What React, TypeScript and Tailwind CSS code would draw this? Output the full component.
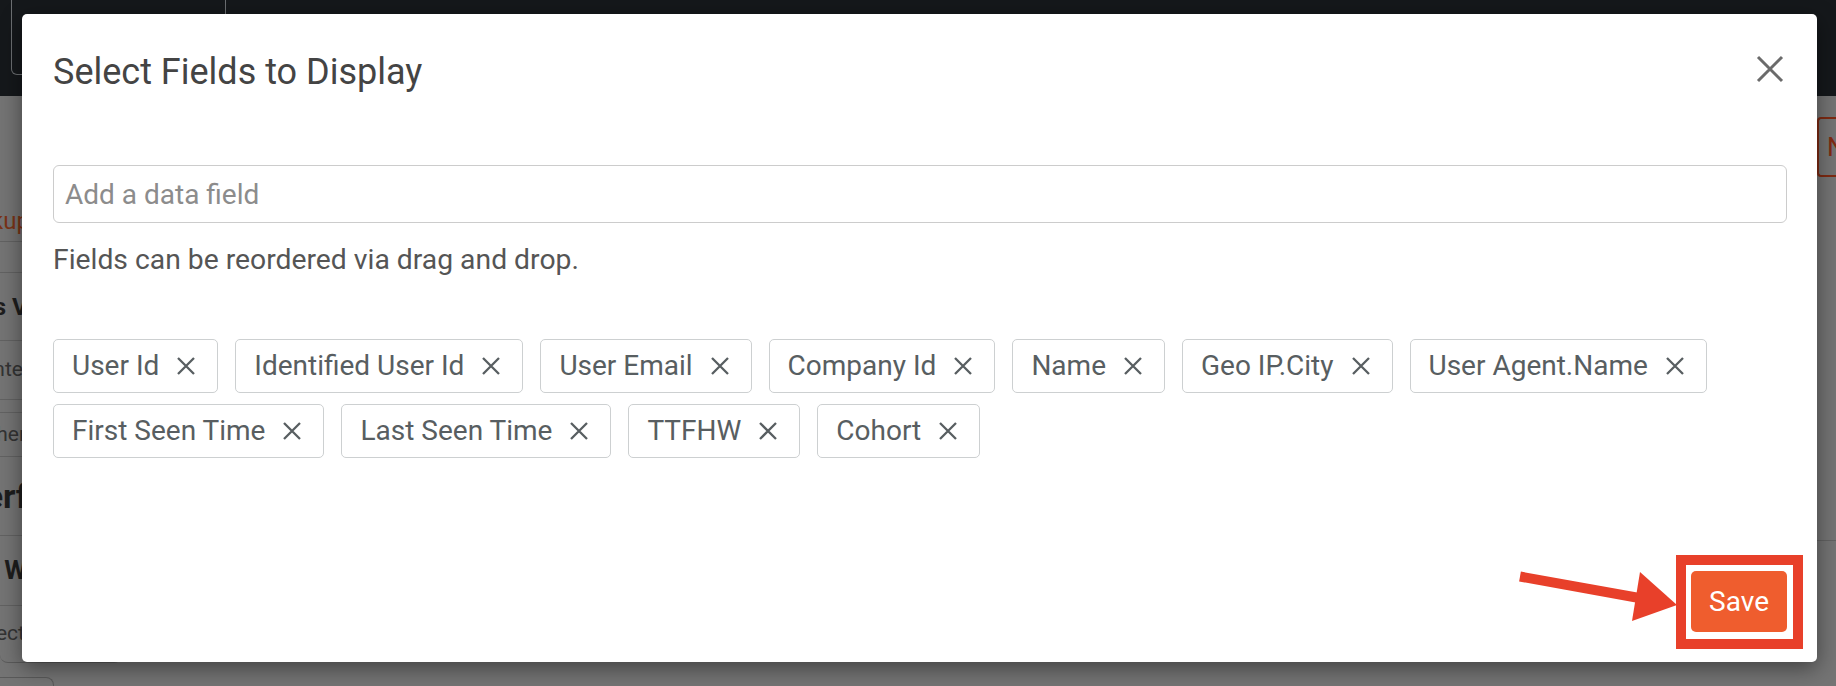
const fields = [
  "User Id",
  "Identified User Id",
  "User Email",
  "Company Id",
  "Name",
  "Geo IP.City",
  "User Agent.Name",
  "First Seen Time",
  "Last Seen Time",
  "TTFHW",
  "Cohort",
];

function CrossIcon({ className }: { className?: string }) {
  return (
    <svg viewBox="0 0 20 20" className={className} fill="none" stroke="currentColor" strokeWidth="2.3">
      <path d="M2 2 L18 18 M18 2 L2 18" />
    </svg>
  );
}

function FieldTag({ label }: { label: string }) {
  return (
    <div className="flex h-[54px] items-center rounded-[5px] border border-[#cdd0d1] pl-[18px] pr-[21px] text-[28px] text-[#585e61]">
      <span className="whitespace-nowrap">{label}</span>
      <CrossIcon className="ml-[17px] h-[20px] w-[20px] shrink-0" />
    </div>
  );
}

// the dimmed page behind the dialog, only a sliver of it shows
function BackdropPage() {
  return (
    <div className="flex h-full flex-col">
      <header className="h-[96px] shrink-0 bg-[#15181b] pl-[11px]">
        <div className="h-[75px] w-[215px] rounded-b-[6px] border border-t-0 border-[#6c6f72]" />
      </header>
      <div className="flex flex-1 justify-between">
        <div className="flex w-[140px] flex-col text-[21px]">
          <div className="h-[104px]" />
          <div className="flex h-[42px] w-[30px] items-center justify-end overflow-hidden whitespace-nowrap border-b border-[#626262] text-[24px] text-[#7a3316]">
            Backup
          </div>
          <div className="h-[31px] w-[22px] border-b border-[#626262]" />
          <div className="flex h-[68px] w-[34px] items-center justify-end overflow-hidden whitespace-nowrap border-b border-[#626262] text-[24px] font-bold text-[#1d1d1d]">
            Fields Vi
          </div>
          <div className="flex h-[59px] w-[30px] items-center justify-end overflow-hidden whitespace-nowrap border-b border-[#626262] text-[#333]">
            Enter
          </div>
          <div className="h-[13px] w-[22px] border-b border-[#626262]" />
          <div className="flex h-[44px] w-[26px] items-center justify-end overflow-hidden whitespace-nowrap border-b border-[#626262] text-[#333]">
            Other
          </div>
          <div className="flex h-[79px] w-[28px] items-center justify-end overflow-hidden whitespace-nowrap border-b border-[#626262] text-[34px] font-bold text-[#1d1d1d]">
            Perf
          </div>
          <div className="flex h-[70px] w-[34px] items-center justify-end overflow-hidden whitespace-nowrap border-b border-[#626262] text-[26px] font-bold text-[#1d1d1d]">
            Est Wi
          </div>
          <div className="flex h-[57px] w-[122px] items-center overflow-hidden whitespace-nowrap rounded-b-[8px] border-b border-r border-[#5a5a5a] text-[#333]">
            <span className="flex w-[30px] justify-end overflow-hidden">Selecti</span>
          </div>
          <div className="mt-[14px] h-[20px] w-[54px] rounded-tr-[8px] border-r border-t border-[#5a5a5a]" />
        </div>
        <div className="flex w-[19px] flex-col">
          <div className="h-[21px]" />
          <div className="flex h-[60px] items-center rounded-l-[4px] border-[2px] border-r-0 border-[#7f2a12] pl-[8px] text-[26px] text-[#7f2a12]">
            N
          </div>
          <div className="mt-[363px] border-b border-[#626262]" />
        </div>
      </div>
    </div>
  );
}

export default function App() {
  return (
    <div className="relative h-[686px] w-[1836px] overflow-hidden bg-[#747474] font-['Roboto',sans-serif]">
      <BackdropPage />

      {/* dialog */}
      <div className="absolute left-[22px] top-[14px] flex h-[648px] w-[1795px] flex-col rounded-[5px] bg-white pb-[30px] pl-[31px] pr-[30px] pt-[37px] shadow-[0_6px_22px_rgba(0,0,0,0.45)]">
        <div className="flex items-start justify-between">
          <h2 className="text-[36px] leading-[42px] text-[#444]">Select Fields to Display</h2>
          <button className="mr-[3px] mt-[4px] text-[#6b6b6b]">
            <svg viewBox="0 0 28 28" className="h-[28px] w-[28px]" fill="none" stroke="currentColor" strokeWidth="3">
              <path d="M2 2 L26 26 M26 2 L2 26" />
            </svg>
          </button>
        </div>

        <input
          className="mt-[72px] h-[58px] rounded-[6px] border border-[#cccccc] px-[11px] text-[28px] text-[#444] outline-none placeholder:text-[#8c8c8c]"
          placeholder="Add a data field"
        />
        <p className="mt-[17px] text-[28.3px] leading-[40px] text-[#555]">Fields can be reordered via drag and drop.</p>

        <div className="mt-[59px] flex flex-wrap gap-x-[17px] gap-y-[11px]">
          {fields.map((f) => (
            <FieldTag key={f} label={f} />
          ))}
        </div>

        <div className="mt-auto flex justify-end">
          <div className="relative">
            <button className="h-[61px] rounded-[5px] bg-[#ef5d2e] px-[18px] text-[28px] text-white">Save</button>
            {/* highlight box from the screenshot annotation */}
            <div className="absolute -left-[15px] -top-[16px] h-[94px] w-[127px] border-[10px] border-[#e8402a]" />
          </div>
        </div>
      </div>

      {/* annotation arrow */}
      <svg className="absolute left-[1515px] top-[565px] h-[62px] w-[170px]" viewBox="1515 565 170 62">
        <line x1="1520" y1="576.5" x2="1642" y2="598.5" stroke="#e8402a" strokeWidth="10" />
        <polygon points="1677,605 1640,572 1632,621" fill="#e8402a" />
      </svg>
    </div>
  );
}
